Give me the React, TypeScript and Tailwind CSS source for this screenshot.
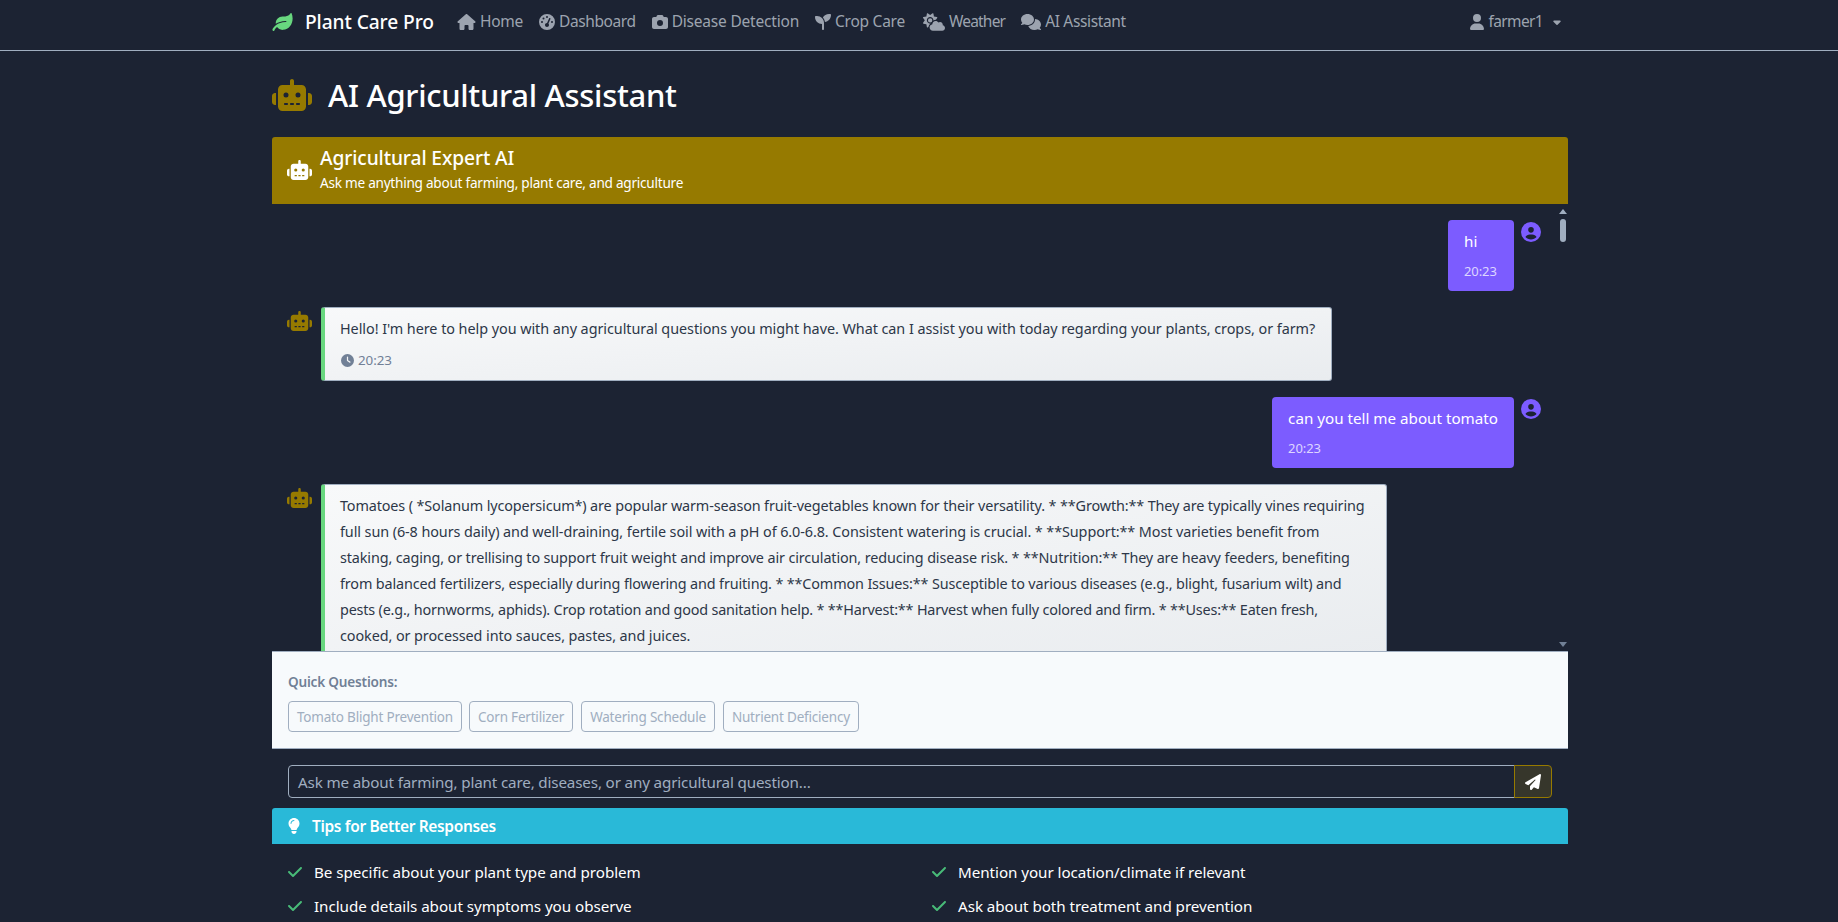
import { FaLeaf } from 'react-icons/fa';
import { FaHouse, FaGaugeHigh, FaCamera, FaSeedling, FaCloudSun, FaComments, FaUser, FaRobot, FaCircleUser, FaClock, FaPaperPlane, FaLightbulb, FaCheck, FaCaretDown } from 'react-icons/fa6';

const navLinks = [
  { label: 'Home', icon: FaHouse, iconClass: 'w-[19px] h-[16px]', textClass: 'tracking-[-0.25px]' },
  { label: 'Dashboard', icon: FaGaugeHigh, iconClass: 'w-[16px] h-[16px]', textClass: 'tracking-[-0.4px]' },
  { label: 'Disease Detection', icon: FaCamera, iconClass: 'w-[16px] h-[16px]', textClass: 'tracking-[-0.2px]' },
  { label: 'Crop Care', icon: FaSeedling, iconClass: 'w-[16px] h-[16px]', textClass: 'tracking-[-0.25px]' },
  { label: 'Weather', icon: FaCloudSun, iconClass: 'w-[22px] h-[18px]', textClass: 'ml-[2px] tracking-[-0.8px]' },
  { label: 'AI Assistant', icon: FaComments, iconClass: 'w-[20px] h-[16px]', textClass: 'tracking-[-0.35px]' },
];

const quickQuestions = ['Tomato Blight Prevention', 'Corn Fertilizer', 'Watering Schedule', 'Nutrient Deficiency'];

const tipsLeft = ['Be specific about your plant type and problem', 'Include details about symptoms you observe'];
const tipsRight = ['Mention your location/climate if relevant', 'Ask about both treatment and prevention'];

const tomatoLines = [
  { text: 'Tomatoes ( *Solanum lycopersicum*) are popular warm-season fruit-vegetables known for their versatility. * **Growth:** They are typically vines requiring', className: 'tracking-[-0.13px]' },
  { text: 'full sun (6-8 hours daily) and well-draining, fertile soil with a pH of 6.0-6.8. Consistent watering is crucial. * **Support:** Most varieties benefit from', className: 'tracking-[-0.085px]' },
  { text: 'staking, caging, or trellising to support fruit weight and improve air circulation, reducing disease risk. * **Nutrition:** They are heavy feeders, benefiting', className: 'tracking-[-0.13px]' },
  { text: 'from balanced fertilizers, especially during flowering and fruiting. * **Common Issues:** Susceptible to various diseases (e.g., blight, fusarium wilt) and', className: 'tracking-[-0.145px]' },
  { text: 'pests (e.g., hornworms, aphids). Crop rotation and good sanitation help. * **Harvest:** Harvest when fully colored and firm. * **Uses:** Eaten fresh,', className: 'tracking-[-0.19px]' },
  { text: 'cooked, or processed into sauces, pastes, and juices.', className: 'tracking-[-0.08px]' },
];

function UserMessage({ text }: { text: string }) {
  return (
    <div className="flex justify-end pr-[27px] mb-[16px]">
      <div className="bg-[#7c5cff] rounded-[4px] px-4 pt-[8px] min-w-[66px] text-white h-[71px]">
        <div className="text-[15.2px] leading-[26px]">{text}</div>
        <div className="text-[13px] leading-[18px] mt-[8px] text-white/75 tracking-[-0.1px]">20:23</div>
      </div>
      <FaCircleUser className="ml-[7px] mt-[2px] text-[#7c5cff] w-[20px] h-[20px]" />
    </div>
  );
}

function BotMessage({ children }: { children: React.ReactNode }) {
  return (
    <div className="flex items-start pl-[15px]">
      <FaRobot className="text-[#967a00] w-[25px] h-[20px] mt-[4px] mr-[9px] shrink-0" />
      <div className="border border-[#a0aec0] border-l-[4px] border-l-[#68d77f] rounded-[3px] bg-gradient-to-br from-[#f8f9fa] to-[#e9ecef] pl-[15px] pr-[16px] pt-[8px] pb-[10px] text-[#2d3748] text-[14.4px] leading-[26px] tracking-[-0.05px] whitespace-nowrap">
        {children}
      </div>
    </div>
  );
}

export default function App() {
  return (
    <div className="h-screen overflow-hidden bg-[#1c2333] font-['Noto_Sans',sans-serif]">
      <nav className="h-[51px] border-b border-[#a0aec0]">
        <div className="w-[1296px] ml-[272px] h-[50px] pb-[6px] flex items-center">
          <FaLeaf className="text-[#68d77f] w-[21px] h-[18px] mr-[12px]" />
          <span className="text-white text-[19.2px] font-medium tracking-[-0.1px] mr-[23px]">Plant Care Pro</span>
          <div className="flex items-center gap-[16px] text-[#9ca3af] text-[15.5px]">
            {navLinks.map(({ label, icon: Icon, iconClass, textClass }) => (
              <a key={label} className={`flex items-center gap-[4px] ${textClass}`}>
                <Icon className={iconClass} />
                {label}
              </a>
            ))}
          </div>
          <div className="ml-auto flex items-center text-[#9ca3af] text-[15.5px] tracking-[-0.65px] mr-[6px]">
            <FaUser className="w-[14px] h-[16px] mr-[5px]" />
            farmer1
            <FaCaretDown className="w-[10px] h-[12px] ml-[9px]" />
          </div>
        </div>
      </nav>

      <main className="w-[1296px] ml-[272px]">
        <h1 className="flex items-center h-[86px] pt-[3px] text-white text-[31px] font-medium tracking-[-0.3px]">
          <FaRobot className="text-[#967a00] w-[40px] h-[32px] -mt-[2px] mr-[16px]" />
          AI Agricultural Assistant
        </h1>

        <div className="h-[67px] bg-[#967a00] rounded-t-[3px] flex items-center pl-[15px] text-white">
          <FaRobot className="w-[25px] h-[20px] -mt-[1px] mr-[8px]" />
          <div className="-mt-[2px]">
            <div className="text-[19.2px] leading-[24px] font-medium tracking-[-0.1px]">Agricultural Expert AI</div>
            <div className="text-[13.6px] leading-[20px] mt-[3px] tracking-[-0.25px]">Ask me anything about farming, plant care, and agriculture</div>
          </div>
        </div>

        <div className="relative h-[447px] overflow-hidden pt-[16px]">
          <UserMessage text="hi" />
          <BotMessage>
            <div>Hello! I'm here to help you with any agricultural questions you might have. What can I assist you with today regarding your plants, crops, or farm?</div>
            <div className="flex items-center gap-[4px] pl-[1px] text-[13.4px] leading-[20px] text-[#718096] mt-[8px]">
              <FaClock className="w-[13px] h-[13px]" />
              20:23
            </div>
          </BotMessage>
          <div className="h-[16px]" />
          <UserMessage text="can you tell me about tomato" />
          <BotMessage>
            <div className="pr-[5px] leading-[25.92px]">
              {tomatoLines.map((line) => (
                <div key={line.text} className={line.className}>{line.text}</div>
              ))}
            </div>
          </BotMessage>

          {/* scrollbar */}
          <div className="absolute right-0 top-0 bottom-0 w-[16px]">
            <div className="absolute left-[7px] top-[5px] w-0 h-0 border-x-[4px] border-x-transparent border-b-[5px] border-b-[#a0aec0]" />
            <div className="absolute left-[8px] top-[15px] w-[6px] h-[23px] rounded-full bg-[#a0aec0]" />
            <div className="absolute left-[7px] bottom-[4px] w-0 h-0 border-x-[4px] border-x-transparent border-t-[5px] border-t-[#718096]" />
          </div>
        </div>

        <div className="h-[98px] bg-[#f7fafc] border-y border-[#a0aec0] px-[16px] pt-[20px]">
          <div className="text-[13.6px] leading-[20px] font-semibold text-[#718096] tracking-[-0.2px]">Quick Questions:</div>
          <div className="flex gap-[8px] mt-[9px]">
            {quickQuestions.map((q, i) => (
              <button key={q} className={`h-[31px] px-[8px] pt-[1px] border border-[#a0aec0] rounded-[4px] text-[#a0aec0] text-[13.5px] tracking-[-0.2px] ${i === 0 ? '-mr-[1px]' : ''}`}>{q}</button>
            ))}
          </div>
        </div>

        <div className="flex px-[16px] pt-[16px] h-[59px]">
          <div className="flex-1 h-[33px] border border-[#a0aec0] rounded-l-[4px] px-[9px] pt-[1px] flex items-center text-[#a0aec0] text-[15.2px] tracking-[-0.15px]">
            Ask me about farming, plant care, diseases, or any agricultural question...
          </div>
          <button className="w-[38px] h-[33px] -ml-px border border-[#967a00] rounded-r-[4px] bg-[#36362b] flex items-center justify-center text-white">
            <FaPaperPlane className="w-[16px] h-[16px]" />
          </button>
        </div>

        <div className="h-[36px] bg-[#29b9d8] rounded-t-[3px] flex items-center pl-[16px] pt-[1px] text-white font-semibold text-[15.5px] tracking-[-0.35px]">
          <FaLightbulb className="w-[12px] h-[16px] -mt-[1px] mr-[12px]" />
          Tips for Better Responses
        </div>

        <div className="grid grid-cols-[644px_1fr] px-[15px] pt-[11px] text-white text-[15.2px] tracking-[-0.05px]">
          {[tipsLeft, tipsRight].map((col, i) => (
            <div key={i}>
              {col.map((tip) => (
                <div key={tip} className="flex items-center h-[34px]">
                  <FaCheck className="text-[#48bb78] w-[16px] h-[16px] mr-[11px]" />
                  {tip}
                </div>
              ))}
            </div>
          ))}
        </div>
      </main>
    </div>
  );
}
